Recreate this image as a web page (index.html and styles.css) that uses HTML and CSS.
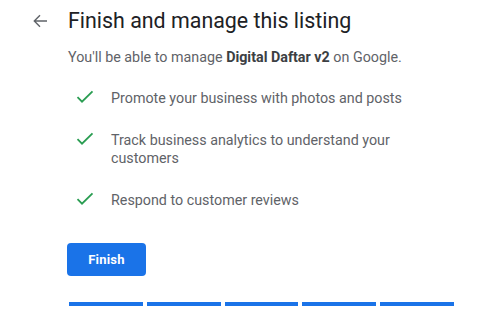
FILE: index.html
```html
<!DOCTYPE html>
<html lang="en">
<head>
<meta charset="UTF-8" />
<title>Finish and manage this listing</title>
<meta name="viewport" content="width=device-width, initial-scale=1" />
<link rel="stylesheet" href="styles.css">
</head>
<body>

<main class="panel">
  <header class="panel-head">
    <button class="back-btn" type="button" aria-label="Back">
      <svg width="16" height="16" viewBox="0 0 16 16">
        <path d="M15 8H2.5M8 2.3L2.3 8L8 13.7" fill="none" stroke="#5f6368" stroke-width="1.4" />
      </svg>
    </button>
    <h1>Finish and manage this listing</h1>
  </header>

  <div class="panel-body">
    <p class="lead">You'll be able to manage <b>Digital Daftar v2</b> on Google.</p>

    <ul class="perks">
      <li>
        <svg class="tick" width="18" height="14" viewBox="0 0 18 14">
          <path d="M1.5 7.2L6 11.7L16.5 1.3" fill="none" stroke="#2a9d52" stroke-width="1.8" />
        </svg>
        <span>Promote your business with photos and posts</span>
      </li>
      <li>
        <svg class="tick" width="18" height="14" viewBox="0 0 18 14">
          <path d="M1.5 7.2L6 11.7L16.5 1.3" fill="none" stroke="#2a9d52" stroke-width="1.8" />
        </svg>
        <span>Track business analytics to understand your customers</span>
      </li>
      <li>
        <svg class="tick" width="18" height="14" viewBox="0 0 18 14">
          <path d="M1.5 7.2L6 11.7L16.5 1.3" fill="none" stroke="#2a9d52" stroke-width="1.8" />
        </svg>
        <span>Respond to customer reviews</span>
      </li>
    </ul>

    <button class="finish-btn" type="button">Finish</button>

    <div class="steps">
      <span></span><span></span><span></span><span></span><span></span>
    </div>
  </div>
</main>

</body>
</html>
```

FILE: styles.css
```css
:root {
  --blue: #1a73e8;
  --text-dark: #202124;
  --text-grey: #5f6368;
}
* {
  box-sizing: border-box;
}
body {
  margin: 0;
  font-family: Roboto, 'Noto Sans', sans-serif;
  background: #fff;
  color: var(--text-dark);
}
.panel {
  width: 484px;
  padding: 8px 0 0 28px;
}
.panel-head {
  display: flex;
  align-items: center;
  height: 26px;
}
.back-btn {
  width: 24px;
  height: 24px;
  padding: 0;
  margin-right: 16px;
  border: none;
  background: none;
  display: flex;
  align-items: center;
  justify-content: center;
}
.panel-head h1 {
  margin: 0;
  font-size: 21.4px;
  font-weight: 400;
  line-height: 26px;
}
.panel-body {
  padding-left: 40px;
  width: 426px;
}
.lead {
  margin: 13px 0 0;
  font-size: 14.3px;
  line-height: 20px;
  color: var(--text-grey);
}
.lead b {
  font-weight: 700;
  color: #3c4043;
}
.perks {
  list-style: none;
  margin: 22px 0 0;
  padding: 0;
}
.perks li {
  display: flex;
  align-items: flex-start;
  margin-bottom: 24px;
  font-size: 14.3px;
  line-height: 18px;
  color: var(--text-grey);
}
.perks li:last-child {
  margin-bottom: 0;
}
.tick {
  flex-shrink: 0;
  margin: 1px 17px 0 8px;
}
.finish-btn {
  display: block;
  margin-top: 34px;
  margin-left: -1px;
  width: 79px;
  height: 33px;
  border: none;
  border-radius: 4px;
  background: var(--blue);
  color: #fff;
  font-family: Roboto, sans-serif;
  font-size: 13px;
  font-weight: 700;
  letter-spacing: 0.2px;
}
.steps {
  display: flex;
  gap: 4px;
  margin-top: 26px;
  margin-left: 1px;
  width: 385px;
}
.steps span {
  flex: 1;
  height: 4px;
  background: var(--blue);
}
```
